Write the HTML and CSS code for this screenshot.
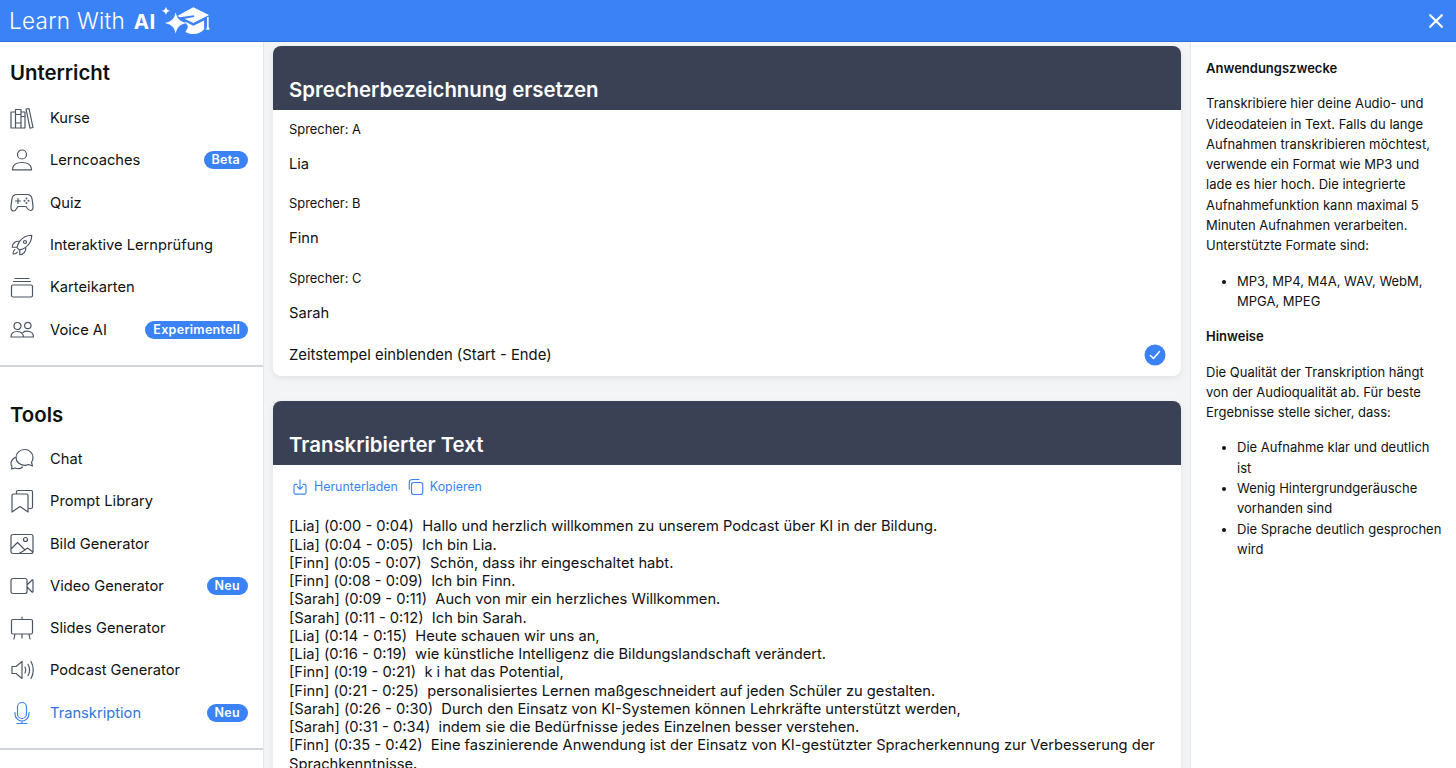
FILE: index.html
```html
<!DOCTYPE html>
<html>
<head>
    <meta charset="utf-8" />
    <title>Learn With AI</title>
    <link rel="stylesheet" href="styles.css">
</head>
<body>
    <header class="topbar">
        <div class="logo">
            <span class="logoText">Learn With <b>AI</b></span>
            <svg class="logoIcon" viewBox="0 0 50 30" fill="#fff">
                <path d="M15 6c1.300 6.500 3.700 9.200 11 11-7.300 1.800-9.700 4.500-11 11-1.300-6.500-3.700-9.200-11-11 7.300-1.800 9.700-4.500 11-11z"/>
                <path d="M5 0.500c.6 2.600 1.500 3.500 4.200 4.200C6.500 5.400 5.600 6.300 5 8.900 4.400 6.300 3.500 5.400.8 4.700 3.500 4 4.400 3.100 5 .5z"/>
                <path d="M33 1l16 8-16 8-9-4.400 10-1.600-.4-1.800-14.100 2.100-3-1.500z"/>
                <path d="M24.500 15.500l8.500 4.300 11-5.300v9c-2.500 3-6.500 4.800-11 4.800-3 0-6-.8-8.100-2.100 1.400-2.200 2.300-4 2.600-5.600z"/>
                <path d="M47 11h1.600v9.500l1 3.500h-3.600l1-3.500z"/>
            </svg>
        </div>
        <svg class="closeIcon" viewBox="0 0 24 24" fill="none" stroke="#fff" stroke-width="2.600" stroke-linecap="round">
            <path d="M5 5l14 14M19 5L5 19"/>
        </svg>
    </header>

    <div class="layout">
        <nav class="sidebar">
            <section class="navGroup">
                <h2>Unterricht</h2>
                <a class="navItem">
                    <svg class="navIcon" viewBox="0 0 24 24"><path d="M1 6h4.500v16H1zM5.500 3.500H11V22H5.500zM5.500 8.500H11M5.500 17H11M11 6h4v16h-4zM11 10.500h4M16 3l3-.5 4 19-3 .6z"/></svg>
                    <span>Kurse</span>
                </a>
                <a class="navItem">
                    <svg class="navIcon" viewBox="0 0 24 24"><path d="M16.500 6.500a4.500 4.500 0 11-9 0 4.500 4.500 0 019 0zM2.500 21.800c0-.400 0-1 .1-1.400C3.300 16.800 7 14.500 12 14.500s8.700 2.300 9.400 5.900c.1.400.1 1 .1 1.400z"/></svg>
                    <span>Lerncoaches</span>
                    <em class="badge">Beta</em>
                </a>
                <a class="navItem">
                    <svg class="navIcon" viewBox="0 0 24 24"><path d="M7 3.500h10c2.500 0 4.500 1.500 5 4l1 7.500c.4 2.700-.7 4.500-2.500 4.500-1.500 0-2.500-1-3.500-2.500l-1-1.500H8l-1 1.500C6 19 5 20 3.500 20 1.700 20 .6 18 1 15l1-7.500c.5-2.500 2.500-4 5-4zM8 7.500v5M5.500 10h5"/><circle cx="16.500" cy="7.500" r=".4"/><circle cx="16.500" cy="12" r=".4"/><circle cx="14.500" cy="9.800" r=".4"/><circle cx="18.500" cy="9.800" r=".4"/></svg>
                    <span>Quiz</span>
                </a>
                <a class="navItem">
                    <svg class="navIcon" viewBox="0 0 24 24"><path d="M15.590 14.370a6 6 0 01-5.840 7.380v-4.800m5.840-2.580a14.980 14.980 0 006.160-12.120A14.980 14.980 0 009.631 8.410m5.960 5.960a14.926 14.926 0 01-5.841 2.580m-.119-8.540a6 6 0 00-7.381 5.840h4.800m2.581-5.840a14.927 14.927 0 00-2.580 5.840m2.699 2.700c-.103.021-.207.041-.311.060a15.090 15.090 0 01-2.448-2.448 14.900 14.900 0 01.060-.312m-2.240 2.390a4.493 4.493 0 00-1.757 4.306 4.493 4.493 0 004.306-1.758M16.500 9a1.500 1.500 0 11-3 0 1.500 1.500 0 013 0z"/></svg>
                    <span>Interaktive Lernprüfung</span>
                </a>
                <a class="navItem">
                    <svg class="navIcon" viewBox="0 0 24 24"><path d="M5 3.500h14M3.500 6.500h17M3 10h18a1.500 1.500 0 011.500 1.500v9A1.500 1.500 0 0121 22H3a1.500 1.500 0 01-1.500-1.500v-9A1.500 1.500 0 013 10z"/></svg>
                    <span>Karteikarten</span>
                </a>
                <a class="navItem">
                    <svg class="navIcon" viewBox="0 0 24 24"><path d="M11 8a3.500 3.500 0 11-7 0 3.500 3.500 0 017 0zM21 7.500a3.200 3.200 0 11-6.400 0 3.200 3.200 0 016.400 0zM1 19c0-3.500 2.500-5.500 6-5.500 2.500 0 4.500 1 5.500 2.500.7 1 1 2 1 3zM13 14.500c1-.8 2.500-1.300 4-1.300 3.700 0 6.500 2.300 6.500 5.800h-10"/></svg>
                    <span>Voice AI</span>
                    <em class="badge">Experimentell</em>
                </a>
            </section>
            <section class="navGroup">
                <h2>Tools</h2>
                <a class="navItem">
                    <svg class="navIcon" viewBox="0 0 24 24"><path d="M14.500 2.500c4.800 0 8.500 3.500 8.500 8 0 2-.7 3.700-1.500 5l1 3.500-4-1.500c-1.200.5-2.500.8-4 .8-4.700 0-8.500-3.400-8.500-7.800s3.800-8 8.500-8zM5 10.500C2.800 12 1 14 1 16.500c0 1 .3 2 1 3L1.500 22l3.500-1c2.300.9 5.500.8 7.500-1"/></svg>
                    <span>Chat</span>
                </a>
                <a class="navItem">
                    <svg class="navIcon" viewBox="0 0 24 24"><path d="M2 6.500C2 5.700 2.700 5 3.500 5h13c.8 0 1.500.7 1.500 1.500V23l-8-5.500L2 23zM6.500 5V3C6.500 2.200 7.200 1.500 8 1.500h13.500c.8 0 1 .7 1 1.500v15c0 1-.5 1.500-1.500 1.500h-3"/></svg>
                    <span>Prompt Library</span>
                </a>
                <a class="navItem">
                    <svg class="navIcon" viewBox="0 0 24 24"><path d="M3 2.500h18a2 2 0 012 2v15a2 2 0 01-2 2H3a2 2 0 01-2-2v-15a2 2 0 012-2zM1 17l6.500-6.500 7.500 7.500 2.500-2 5.500 4M9 21.500l6-3.500"/><circle cx="15.500" cy="7.500" r="2"/></svg>
                    <span>Bild Generator</span>
                </a>
                <a class="navItem">
                    <svg class="navIcon" viewBox="0 0 24 24"><path d="M3 4.500h12a2 2 0 012 2v11a2 2 0 01-2 2H3a2 2 0 01-2-2v-11a2 2 0 012-2zM17 11l5-5c.5-.4 1-.2 1 .5v11c0 .7-.5.9-1 .5l-5-5"/></svg>
                    <span>Video Generator</span>
                    <em class="badge">Neu</em>
                </a>
                <a class="navItem">
                    <svg class="navIcon" viewBox="0 0 24 24"><path d="M12 1v2.500M3 3.500h18A1.500 1.500 0 0122.500 5v11.500A1.500 1.500 0 0121 18H3a1.500 1.500 0 01-1.500-1.500V5A1.500 1.500 0 013 3.500zM5 18l-1 5M12 18v4M19 18l1 5"/></svg>
                    <span>Slides Generator</span>
                </a>
                <a class="navItem">
                    <svg class="navIcon" viewBox="0 0 24 24"><path d="M12 3.500v17l-6-5H2v-7h4zM15 9c1 1.800 1 4.200 0 6M18 6.500c2 3.300 2 7.700 0 11M21 3.500c3 5 3 12 0 17"/></svg>
                    <span>Podcast Generator</span>
                </a>
                <a class="navItem active">
                    <svg class="navIcon" viewBox="0 0 24 24"><path d="M12 1.500a4.500 4.500 0 014.500 4.500v7a4.500 4.500 0 01-9 0V6A4.500 4.500 0 0112 1.500zM5 11.500v1.500a7 7 0 0014 0v-1.500M12 20v2.500M7 22.500h10"/></svg>
                    <span>Transkription</span>
                    <em class="badge">Neu</em>
                </a>
            </section>
        </nav>

        <main class="content">
            <section class="card">
                <h3 class="cardHead">Sprecherbezeichnung ersetzen</h3>
                <div class="speakers">
                    <div class="field">
                        <label>Sprecher: A</label>
                        <div class="fieldValue">Lia</div>
                    </div>
                    <div class="field">
                        <label>Sprecher: B</label>
                        <div class="fieldValue">Finn</div>
                    </div>
                    <div class="field">
                        <label>Sprecher: C</label>
                        <div class="fieldValue">Sarah</div>
                    </div>
                    <div class="toggleRow">
                        <span>Zeitstempel einblenden (Start - Ende)</span>
                        <svg class="check" viewBox="0 0 22 22">
                            <circle cx="11" cy="11" r="10.500" fill="#3b82f6"/>
                            <path d="M6.500 11.500l3 3 6-7" fill="none" stroke="#fff" stroke-width="1.500" stroke-linecap="round" stroke-linejoin="round"/>
                        </svg>
                    </div>
                </div>
            </section>

            <section class="card">
                <h3 class="cardHead">Transkribierter Text</h3>
                <div class="actions">
                    <a class="action">
                        <svg viewBox="0 0 24 24"><path d="M8 8.500H6a2 2 0 00-2 2v9a2 2 0 002 2h12a2 2 0 002-2v-9a2 2 0 00-2-2h-2M12 2.500v12M8.500 11.500l3.500 3.500 3.500-3.500"/></svg>
                        Herunterladen
                    </a>
                    <a class="action">
                        <svg viewBox="0 0 24 24"><path d="M9 6h9a3 3 0 013 3v10a3 3 0 01-3 3H9a3 3 0 01-3-3V9a3 3 0 013-3zM3 15V6a4 4 0 014-4h9"/></svg>
                        Kopieren
                    </a>
                </div>
                <div class="transcript">[Lia] (0:00 - 0:04)  Hallo und herzlich willkommen zu unserem Podcast über KI in der Bildung.
[Lia] (0:04 - 0:05)  Ich bin Lia.
[Finn] (0:05 - 0:07)  Schön, dass ihr eingeschaltet habt.
[Finn] (0:08 - 0:09)  Ich bin Finn.
[Sarah] (0:09 - 0:11)  Auch von mir ein herzliches Willkommen.
[Sarah] (0:11 - 0:12)  Ich bin Sarah.
[Lia] (0:14 - 0:15)  Heute schauen wir uns an,
[Lia] (0:16 - 0:19)  wie künstliche Intelligenz die Bildungslandschaft verändert.
[Finn] (0:19 - 0:21)  k i hat das Potential,
[Finn] (0:21 - 0:25)  personalisiertes Lernen maßgeschneidert auf jeden Schüler zu gestalten.
[Sarah] (0:26 - 0:30)  Durch den Einsatz von KI-Systemen können Lehrkräfte unterstützt werden,
[Sarah] (0:31 - 0:34)  indem sie die Bedürfnisse jedes Einzelnen besser verstehen.
[Finn] (0:35 - 0:42)  Eine faszinierende Anwendung ist der Einsatz von KI-gestützter Spracherkennung zur Verbesserung der Sprachkenntnisse.</div>
            </section>
        </main>

        <aside class="help">
            <h4>Anwendungszwecke</h4>
            <p>Transkribiere hier deine Audio- und Videodateien in Text. Falls du lange Aufnahmen transkribieren möchtest, verwende ein Format wie MP3 und lade es hier hoch. Die integrierte Aufnahmefunktion kann maximal 5 Minuten Aufnahmen verarbeiten. Unterstützte Formate sind:</p>
            <ul>
                <li>MP3, MP4, M4A, WAV, WebM, MPGA, MPEG</li>
            </ul>
            <h4>Hinweise</h4>
            <p>Die Qualität der Transkription hängt von der Audioqualität ab. Für beste Ergebnisse stelle sicher, dass:</p>
            <ul>
                <li>Die Aufnahme klar und deutlich ist</li>
                <li>Wenig Hintergrundgeräusche vorhanden sind</li>
                <li>Die Sprache deutlich gesprochen wird</li>
            </ul>
        </aside>
    </div>
</body>
</html>
```

FILE: styles.css
```css
* {
    box-sizing: border-box;
}

html, body {
    height: 100%;
}

body {
    margin: 0;
    display: flex;
    flex-direction: column;
    overflow: hidden;
    font-family: Inter, "Liberation Sans", sans-serif;
    color: #111;
    background-color: #f3f4f6;
}

.topbar {
    flex: none;
    height: 42px;
    display: flex;
    align-items: center;
    justify-content: space-between;
    padding: 0 10px 0 9px;
    background-color: #3b82f6;
    border-bottom: 1px solid #2f6fd8;
    color: #fff;
}

.logo {
    display: flex;
    align-items: center;
    gap: 6px;
}

.logoText {
    font-size: 22.500px;
    font-weight: 300;
    letter-spacing: 0.3px;
}

.logoText b {
    margin-left: 2px;
    font-size: 20.500px;
    font-weight: 700;
}

.logoIcon {
    width: 49px;
    height: 30px;
}

.closeIcon {
    width: 20px;
    height: 20px;
}

.layout {
    flex: 1;
    min-height: 0;
    display: flex;
}

.sidebar {
    flex: none;
    width: 264px;
    background-color: #fff;
    border-right: 1px solid #e5e7eb;
    overflow: hidden;
}

.navGroup {
    padding: 18px 0 14px;
    border-bottom: 2px solid #d1d5db;
}

.navGroup + .navGroup {
    padding-top: 35px;
}

.navGroup h2 {
    margin: 0 10px 11px;
    font-size: 20.400px;
    line-height: 26px;
    font-weight: 600;
}

.navGroup + .navGroup h2 {
    margin-bottom: 10px;
}

.navItem {
    height: 42.300px;
    display: flex;
    align-items: center;
    gap: 16px;
    padding: 0 15px 0 10px;
    font-size: 14.700px;
}

.navItem span {
    flex: 1;
}

.navItem.active {
    color: #2f74e0;
}

.navIcon {
    flex: none;
    width: 24px;
    height: 24px;
    fill: none;
    stroke: #4b5563;
    stroke-width: 1.200;
    stroke-linecap: round;
    stroke-linejoin: round;
}

.active .navIcon {
    stroke: #3b82f6;
}

.badge {
    flex: none;
    padding: 0 8px;
    border-radius: 9px;
    background-color: #3b82f6;
    color: #fff;
    font-style: normal;
    font-size: 12.500px;
    letter-spacing: 0.3px;
    line-height: 18px;
    font-weight: 600;
}

.content {
    flex: 1;
    min-width: 0;
    padding: 4px 9px 0;
    overflow: hidden;
}

.card {
    margin-bottom: 25px;
    border-radius: 8px;
    background-color: #fff;
    box-shadow: 0 2px 6px rgba(0, 0, 0, 0.08);
}

.cardHead {
    margin: 0;
    padding: 29px 16px 6px;
    border-radius: 8px 8px 0 0;
    background-color: #3a4154;
    color: #fff;
    font-size: 20.400px;
    line-height: 29px;
    font-weight: 600;
}

.speakers {
    padding: 12px 16px 10.600px;
}

.field {
    height: 74.300px;
}

.field label {
    display: block;
    font-size: 12.900px;
    line-height: 16px;
}

.fieldValue {
    padding-top: 16px;
    font-size: 14.700px;
    line-height: 20px;
}

.toggleRow {
    display: flex;
    align-items: center;
    justify-content: space-between;
    font-size: 14.850px;
    line-height: 22px;
    margin-top: -1px;
}

.check {
    width: 22px;
    height: 22px;
    margin-right: -1px;
}

.actions {
    display: flex;
    gap: 9px;
    padding: 12px 18px 0;
}

.action {
    display: flex;
    align-items: center;
    gap: 5px;
    font-size: 12.400px;
    line-height: 20px;
    color: #3b82f6;
}

.action svg {
    width: 18px;
    height: 18px;
    fill: none;
    stroke: #3b82f6;
    stroke-width: 1.500;
    stroke-linecap: round;
    stroke-linejoin: round;
}

.transcript {
    padding: 20px 16px 16px;
    font-size: 14.700px;
    line-height: 18.250px;
    white-space: pre-wrap;
}

.help {
    flex: none;
    width: 266px;
    padding: 16px 11px 0 15px;
    background-color: #fff;
    border-left: 1px solid #e5e7eb;
    font-size: 13px;
    line-height: 20.300px;
    overflow: hidden;
}

.help h4 {
    margin: 0 0 15px;
    font-size: 13px;
    line-height: 20.300px;
    font-weight: 600;
}

.help p {
    margin: 0 0 15px;
}

.help ul {
    margin: 0 0 15px;
    padding-left: 31px;
}
```
